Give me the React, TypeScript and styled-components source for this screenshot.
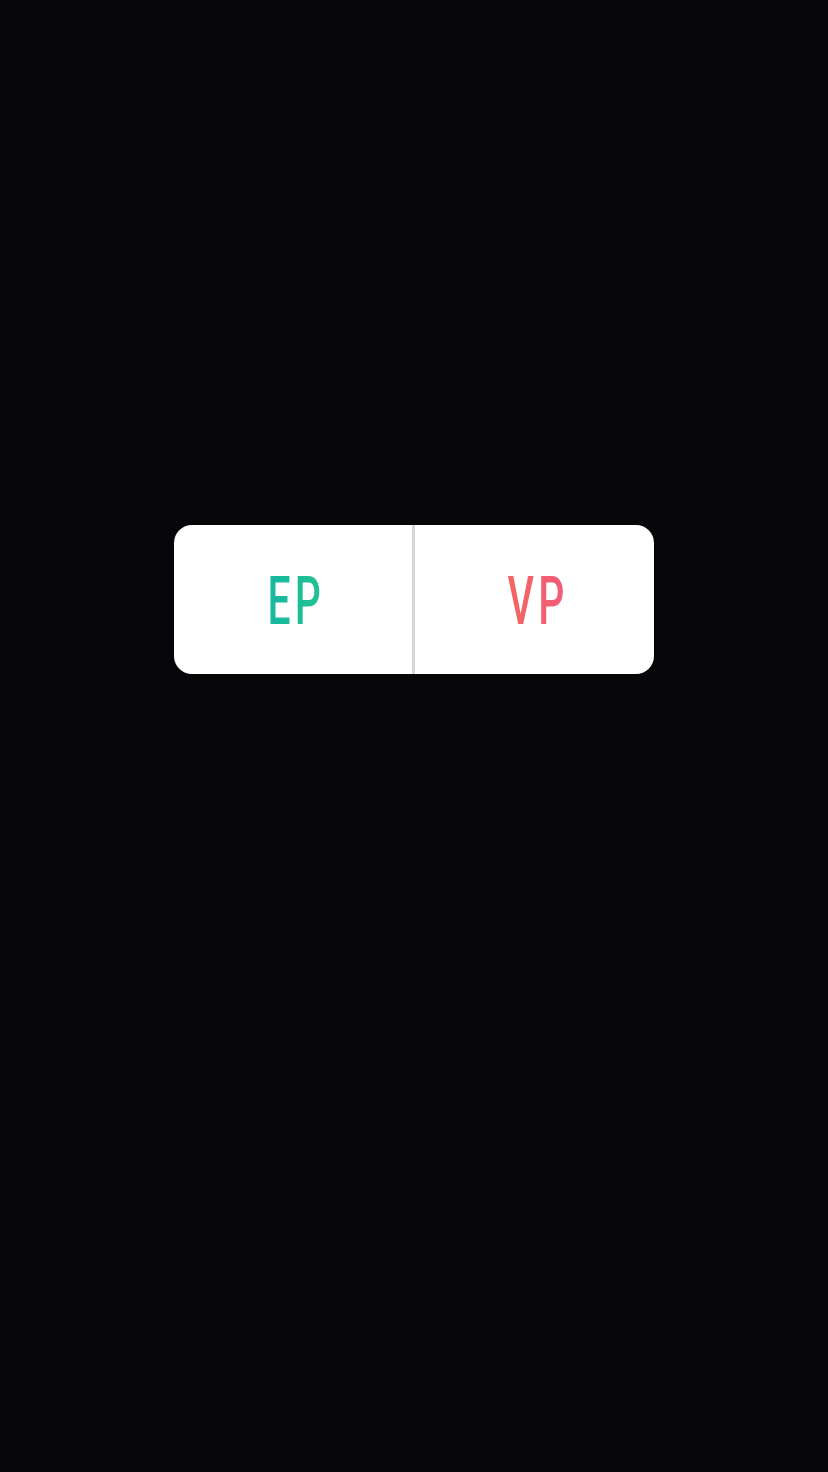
import React from 'react';
import styled, { createGlobalStyle } from 'styled-components';

const GlobalStyle = createGlobalStyle`
  html, body {
    margin: 0;
    padding: 0;
    background: #060608;
  }
`;

const Screen = styled.div`
  width: 828px;
  height: 1472px;
  background: #060608;
  display: flex;
  flex-direction: column;
  align-items: center;
  padding-top: 525px;
  box-sizing: border-box;
`;

// two-option poll sticker
const Poll = styled.div`
  width: 480px;
  height: 149px;
  background: #ffffff;
  border-radius: 18px;
  display: grid;
  grid-template-columns: 238px 3px 1fr;
  overflow: hidden;
`;

const Option = styled.div`
  display: flex;
  align-items: center;
  justify-content: center;
  padding-top: 3px;
`;

const Divider = styled.div`
  background: #d6d6d6;
`;

const Label = styled.span<{ $from: string; $to: string }>`
  display: inline-block;
  font-family: Roboto, 'Liberation Sans', sans-serif;
  font-weight: 500;
  font-size: 67px;
  line-height: 1;
  letter-spacing: 7px;
  margin-right: -7px;
  transform: scaleX(0.61);
  background: linear-gradient(90deg, ${(p) => p.$from}, ${(p) => p.$to});
  -webkit-background-clip: text;
  background-clip: text;
  color: transparent;
`;

export default function App() {
  return (
    <>
      <GlobalStyle />
      <Screen>
        <Poll>
          <Option>
            <Label $from="#17b6a3" $to="#22c48e">EP</Label>
          </Option>
          <Divider />
          <Option>
            <Label $from="#f3665f" $to="#f25a7a">VP</Label>
          </Option>
        </Poll>
      </Screen>
    </>
  );
}
